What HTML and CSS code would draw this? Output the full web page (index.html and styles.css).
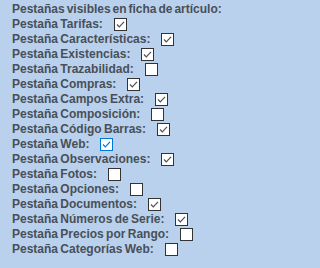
FILE: index.html
```html
<!DOCTYPE html>
<html lang="es">
<head>
<meta charset="utf-8">
<title>Pestañas visibles</title>
<link rel="stylesheet" href="styles.css">
</head>
<body>
<div class="panel">
  <div class="row header">Pestañas visibles en ficha de artículo:</div>
  <div class="row"><span class="lbl">Pestaña Tarifas:</span><span class="cb"><svg viewBox="0 0 11 11"><path d="M2 5.5 L4.3 7.8 L9 2.8"/></svg></span></div>
  <div class="row"><span class="lbl">Pestaña Características:</span><span class="cb"><svg viewBox="0 0 11 11"><path d="M2 5.5 L4.3 7.8 L9 2.8"/></svg></span></div>
  <div class="row"><span class="lbl">Pestaña Existencias:</span><span class="cb"><svg viewBox="0 0 11 11"><path d="M2 5.5 L4.3 7.8 L9 2.8"/></svg></span></div>
  <div class="row"><span class="lbl">Pestaña Trazabilidad:</span><span class="cb"></span></div>
  <div class="row"><span class="lbl">Pestaña Compras:</span><span class="cb"><svg viewBox="0 0 11 11"><path d="M2 5.5 L4.3 7.8 L9 2.8"/></svg></span></div>
  <div class="row"><span class="lbl">Pestaña Campos Extra:</span><span class="cb"><svg viewBox="0 0 11 11"><path d="M2 5.5 L4.3 7.8 L9 2.8"/></svg></span></div>
  <div class="row"><span class="lbl">Pestaña Composición:</span><span class="cb"></span></div>
  <div class="row"><span class="lbl">Pestaña Código Barras:</span><span class="cb"><svg viewBox="0 0 11 11"><path d="M2 5.5 L4.3 7.8 L9 2.8"/></svg></span></div>
  <div class="row"><span class="lbl">Pestaña Web:</span><span class="cb focus"><svg viewBox="0 0 11 11"><path d="M2 5.5 L4.3 7.8 L9 2.8"/></svg></span></div>
  <div class="row"><span class="lbl">Pestaña Observaciones:</span><span class="cb"><svg viewBox="0 0 11 11"><path d="M2 5.5 L4.3 7.8 L9 2.8"/></svg></span></div>
  <div class="row"><span class="lbl">Pestaña Fotos:</span><span class="cb"></span></div>
  <div class="row"><span class="lbl">Pestaña Opciones:</span><span class="cb"></span></div>
  <div class="row"><span class="lbl">Pestaña Documentos:</span><span class="cb"><svg viewBox="0 0 11 11"><path d="M2 5.5 L4.3 7.8 L9 2.8"/></svg></span></div>
  <div class="row"><span class="lbl">Pestaña Números de Serie:</span><span class="cb"><svg viewBox="0 0 11 11"><path d="M2 5.5 L4.3 7.8 L9 2.8"/></svg></span></div>
  <div class="row"><span class="lbl">Pestaña Precios por Rango:</span><span class="cb"></span></div>
  <div class="row"><span class="lbl">Pestaña Categorías Web:</span><span class="cb"></span></div>
</div>
</body>
</html>
```

FILE: styles.css
```css
html, body {
  margin: 0;
  padding: 0;
  background: #b9d1ec;
}

.panel {
  display: flex;
  flex-direction: column;
  padding: 2px 0 0 12px;
  font-family: "Liberation Sans", Arial, sans-serif;
  font-size: 12px;
  font-weight: bold;
  color: #484f59;
  word-spacing: -1px;
}

.row {
  display: flex;
  align-items: center;
  height: 15px;
  line-height: 15px;
  white-space: nowrap;
}

.header {
  word-spacing: -1.4px;
}

.cb {
  box-sizing: border-box;
  width: 13px;
  height: 13px;
  margin-left: 11px;
  border: 1px solid #333333;
  background: #ffffff;
  display: flex;
}

.cb svg {
  width: 11px;
  height: 11px;
  fill: none;
  stroke: #505050;
  stroke-width: 1.2;
}

.cb.focus {
  border-color: #0078d7;
}

.cb.focus svg {
  stroke: #0078d7;
}
```
